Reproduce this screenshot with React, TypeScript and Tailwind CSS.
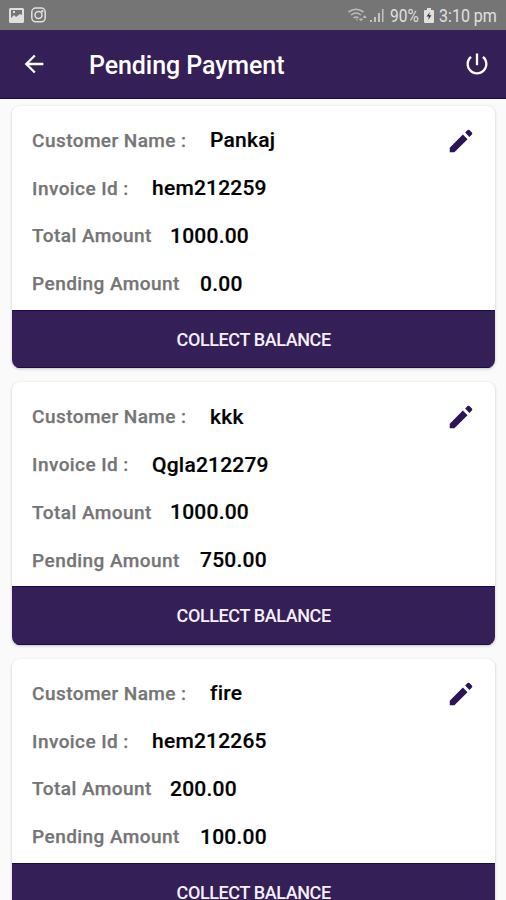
import React from "react";

type Payment = { name: string; invoice: string; total: string; pending: string };

const payments: Payment[] = [
  { name: "Pankaj", invoice: "hem212259", total: "1000.00", pending: "0.00" },
  { name: "kkk", invoice: "Qgla212279", total: "1000.00", pending: "750.00" },
  { name: "fire", invoice: "hem212265", total: "200.00", pending: "100.00" },
];

function StatusBar() {
  return (
    <div className="flex h-[30px] shrink-0 items-center justify-between bg-[#757575] pl-[9px] pr-[9px] text-[#e0e0e0]">
      <div className="flex items-center gap-[7px]">
        <svg width="15" height="15" viewBox="0 0 15 15">
          <path fillRule="evenodd" fill="currentColor" d="M1.5 0h12A1.5 1.5 0 0 1 15 1.5v12a1.5 1.5 0 0 1-1.500 1.500h-12A1.500 1.500 0 0 1 0 13.500v-12A1.500 1.500 0 0 1 1.500 0ZM2 2v8l3-3 2 2 4-3 2 1V2ZM4 3h2v2H4Z" />
        </svg>
        <svg width="15" height="16" viewBox="0 0 15 16" fill="none" stroke="currentColor" strokeWidth="1.500">
          <rect x="0.800" y="1" width="13.400" height="13.800" rx="4" />
          <circle cx="7.500" cy="8" r="3.500" />
          <circle cx="11.300" cy="4.200" r="0.500" />
        </svg>
      </div>
      <div className="flex items-center pt-[1px]">
        <svg width="20" height="18" viewBox="0 0 20 18" fill="none" stroke="currentColor" className="text-[#bcbcbc]">
          <path d="M0.500 5Q8-.5 15.500 5M3 8Q8 4 13 8M5.500 11q2.500-2 5 0" strokeWidth="1.600" />
          <path d="m8 11.500 1.500 2M11.500 12l1.500 1.800 1.500-1.800ZM15.300 10.500l1.400-1.800 1.400 1.800Z" fill="currentColor" />
        </svg>
        <svg width="15" height="16" viewBox="0 0 15 16" className="ml-[1px] text-[#c4c4c4]" fill="currentColor">
          <path d="M1 12h2v2H1ZM5 9h2v5H5ZM9 5h2v9H9ZM13 1h1.500v13H13Z" />
        </svg>
        <span className="ml-[6px] w-[29px] whitespace-nowrap text-[18px] leading-[20px]">
          <span className="inline-block origin-left scale-x-[0.860]">90%</span>
        </span>
        <svg width="10" height="15" viewBox="0 0 10 15" className="ml-[5px]">
          <path fill="currentColor" d="M3 0h4v2h2a1 1 0 0 1 1 1v11a1 1 0 0 1-1 1H1a1 1 0 0 1-1-1V3a1 1 0 0 1 1-1h2Z" />
          <path fill="#333" d="M6 4 2.500 8.500H5L4 12l3.500-4.800H5Z" />
        </svg>
        <span className="ml-[5px] w-[58px] whitespace-nowrap text-[18px] leading-[20px]">
          <span className="inline-block origin-left scale-x-[0.890]">3:10 pm</span>
        </span>
      </div>
    </div>
  );
}

function Header() {
  return (
    <header className="flex h-[69px] shrink-0 items-center border-b border-[#1c0b49] bg-[#342056] pl-[20px] pr-[15px] text-white">
      <svg width="28" height="28" viewBox="0 0 24 24" fill="currentColor">
        <path d="M20 11H7.830l5.590-5.590L12 4l-8 8 8 8 1.410-1.410L7.830 13H20v-2z" />
      </svg>
      <h1 className="ml-[41px] flex-1 pt-[4px] text-[25px] font-medium leading-[30px] tracking-[-0.080px]">Pending Payment</h1>
      <svg width="28" height="28" viewBox="0 0 24 24" fill="currentColor">
        <path d="M13 3h-2v10h2V3zm4.830 2.170-1.420 1.420C17.990 7.860 19 9.810 19 12c0 3.870-3.130 7-7 7s-7-3.130-7-7c0-2.190 1.010-4.140 2.580-5.420L6.170 5.170C4.230 6.820 3 9.260 3 12c0 4.970 4.030 9 9 9s9-4.030 9-9c0-2.740-1.230-5.180-3.170-6.830z" />
      </svg>
    </header>
  );
}

function Row({ label, value, labelClass }: { label: string; value: string; labelClass: string }) {
  return (
    <div className="flex h-[47.900px] items-center whitespace-nowrap">
      <span className={`shrink-0 text-[19px] font-medium tracking-[0.430px] text-[#757575] [-webkit-text-stroke:0.250px_#757575] ${labelClass}`}>{label}</span>
      <span className="text-[21px] font-medium tracking-[0.200px] text-black [-webkit-text-stroke:0.200px_#000]">{value}</span>
    </div>
  );
}

function PaymentCard({ payment }: { payment: Payment }) {
  return (
    <section className="h-[262.500px] shrink-0 overflow-hidden rounded-[8px] bg-white shadow-[0_1px_3px_rgba(0,0,0,0.22)]">
      <div className="flex h-[204px] justify-between pl-[19.800px] pr-[19px] pt-[11.500px]">
        <div>
          <Row label="Customer Name :" value={payment.name} labelClass="w-[178px]" />
          <Row label="Invoice Id :" value={payment.invoice} labelClass="w-[120px]" />
          <Row label="Total Amount" value={payment.total} labelClass="w-[138px]" />
          <Row label="Pending Amount" value={payment.pending} labelClass="w-[168px]" />
        </div>
        <svg width="30" height="30" viewBox="0 0 24 24" fill="#2b1458" className="mt-[8.500px]">
          <path d="M3 17.300V21h3.700L17.200 10.500l-3.700-3.700L3 17.300zM20.710 6.700a1 1 0 0 0 0-1.410l-2-2a1 1 0 0 0-1.410 0l-2 2 3.410 3.410 2-2z" />
        </svg>
      </div>
      <button className="flex h-[58.500px] w-full items-center justify-center border-y border-[#1c0b49] bg-[#342056] pt-[1px] text-[18px] font-medium tracking-[-0.400px] text-[#f5effb]">
        COLLECT BALANCE
      </button>
    </section>
  );
}

export default function App() {
  return (
    <div className="flex h-[900px] w-[506px] flex-col overflow-hidden bg-[#fafafa] font-['Roboto',sans-serif]">
      <StatusBar />
      <Header />
      <main className="flex min-h-0 flex-1 flex-col gap-[14px] overflow-hidden pl-[12.300px] pr-[11px] pt-[6.500px]">
        {payments.map((payment) => (
          <PaymentCard key={payment.invoice} payment={payment} />
        ))}
      </main>
    </div>
  );
}
